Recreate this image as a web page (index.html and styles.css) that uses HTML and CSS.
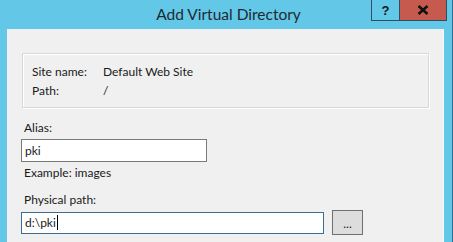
FILE: index.html
```html
<!DOCTYPE html>
<html>
<head>
<meta charset="utf-8">
<link rel="stylesheet" href="styles.css">
</head>
<body>
<div class="window">
  <div class="titlebar">
    <div class="title">Add Virtual Directory</div>
    <div class="controls">
      <div class="btn-help">?</div>
      <div class="btn-close">
        <svg width="12" height="10" viewBox="0 0 12 10"><path d="M1.5 1 L10.5 9 M10.5 1 L1.5 9" stroke="#111" stroke-width="2.6" fill="none"/></svg>
      </div>
    </div>
  </div>
  <div class="content">
    <div class="group">
      <div class="row"><span class="key">Site name:</span><span>Default Web Site</span></div>
      <div class="row"><span class="key">Path:</span><span>/</span></div>
    </div>
    <div class="label alias-label">Alias:</div>
    <div class="input alias">pki</div>
    <div class="label hint">Example: images</div>
    <div class="label phys-label">Physical path:</div>
    <div class="path-row">
      <div class="input phys">d:\pki<span class="caret"></span></div>
      <div class="browse">...</div>
    </div>
  </div>
</div>
</body>
</html>
```

FILE: styles.css
```css
html, body {
  margin: 0;
  padding: 0;
}
body {
  width: 453px;
  height: 242px;
  overflow: hidden;
  font-family: Lato, "Noto Sans", sans-serif;
  font-size: 12px;
  color: #1a1a1a;
}
.window {
  background: #63c8e8;
  height: 242px;
  padding: 0 8px 0 7px;
  border-right: 1px solid #2a6f8e;
  box-sizing: border-box;
  width: 453px;
}
.titlebar {
  height: 29px;
  position: relative;
  display: flex;
  justify-content: center;
}
.title {
  font-size: 15.5px;
  line-height: 29px;
  color: #1e2a30;
  margin-left: 6px;
}
.controls {
  position: absolute;
  top: 0;
  right: -3px;
  display: flex;
  height: 21px;
}
.btn-help {
  width: 27px;
  height: 20px;
  border: 1px solid #2d4f5f;
  border-top: none;
  border-right: none;
  display: flex;
  align-items: center;
  justify-content: center;
  font-family: "Liberation Sans", sans-serif;
  font-weight: bold;
  font-size: 13px;
  color: #101820;
}
.btn-close {
  width: 46px;
  height: 20px;
  background: #c75a4f;
  border: 1px solid #2d4f5f;
  border-top: none;
  display: flex;
  align-items: center;
  justify-content: center;
}
.content {
  background: #f0f0f0;
  height: 213px;
  padding: 24px 0 0 14px;
  box-sizing: border-box;
  border-right: 1px solid #f8f8f8;
}
.group {
  margin-left: 1px;
  width: 407px;
  height: 55px;
  box-sizing: border-box;
  border: 1px solid #d8d8d8;
  box-shadow: inset 1px 1px 0 #ffffff, 1px 1px 0 #ffffff;
  padding: 8px 0 0 9px;
}
.row {
  display: flex;
  height: 19px;
  line-height: 19px;
}
.key {
  width: 71px;
}
.label {
  margin-left: 3px;
  line-height: 16px;
}
.alias-label {
  margin-top: 12px;
}
.input {
  height: 23px;
  box-sizing: border-box;
  background: #ffffff;
  border: 1px solid #7a7a7a;
  padding-left: 3px;
  line-height: 21px;
  margin-top: 3px;
}
.alias {
  width: 186px;
}
.hint {
  margin-top: 3px;
}
.phys-label {
  margin-top: 11px;
}
.path-row {
  display: flex;
  align-items: center;
  margin-top: 2px;
}
.phys {
  width: 303px;
  height: 22px;
  line-height: 20px;
  border-color: #3c6e95;
  margin-top: 0;
  display: flex;
  align-items: center;
}
.caret {
  display: inline-block;
  width: 1px;
  height: 15px;
  background: #000;
  margin-left: 1px;
}
.browse {
  margin-left: 8px;
  width: 31px;
  height: 25px;
  box-sizing: border-box;
  background: #dddddd;
  border: 1px solid #707070;
  display: flex;
  justify-content: center;
  align-items: flex-end;
  padding-bottom: 5px;
  line-height: 10px;
  font-size: 12px;
}
```
